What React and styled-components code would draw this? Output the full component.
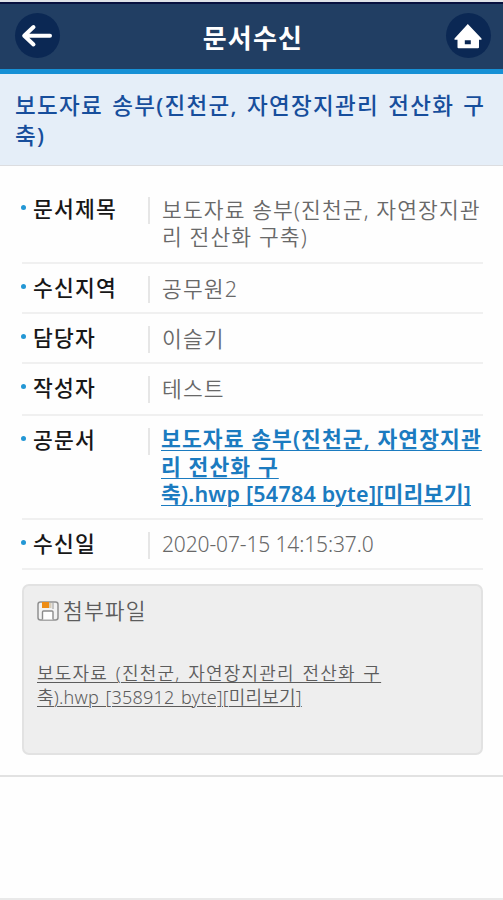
import React from "react";
import styled, { createGlobalStyle } from "styled-components";

const details = [
  { label: "문서제목", lines: ["보도자료 송부(진천군, 자연장지관", "리 전산화 구축)"], height: 79 },
  { label: "수신지역", lines: ["공무원2"], height: 50 },
  { label: "담당자", lines: ["이슬기"], height: 50 },
  { label: "작성자", lines: ["테스트"], height: 52 },
  {
    label: "공문서",
    lines: ["보도자료 송부(진천군, 자연장지관", "리 전산화 구", "축).hwp [54784 byte][미리보기]"],
    height: 104,
    link: true
  },
  { label: "수신일", lines: ["2020-07-15 14:15:37.0"], height: 50, latin: true }
];

export default function App() {
  return (
    <Page>
      <GlobalStyle />
      <Header>
        <RoundButton type="button" aria-label="뒤로">
          <svg width="45" height="45" viewBox="0 0 45 45" fill="none">
            <path
              d="M18.5 14 9.2 22.8 18.5 31.5M10 22.8H35"
              stroke="#fff"
              strokeWidth="4"
              strokeLinecap="round"
              strokeLinejoin="round"
            />
          </svg>
        </RoundButton>
        <HeaderTitle>문서수신</HeaderTitle>
        <RoundButton type="button" aria-label="홈">
          <svg width="45" height="45" viewBox="0 0 45 45">
            <path
              fill="#fff"
              fillRule="evenodd"
              d="M21.8 11 35.5 25.4v1.4H33v7.5q0 1-1 1H12.5q-1 0-1-1v-7.5H8.5v-1.4ZM18.8 27.3v4h6v-4Z"
            />
          </svg>
        </RoundButton>
      </Header>

      <Subject>
        보도자료 송부(진천군, 자연장지관리 전산화 구<br />축)
      </Subject>

      <Content>
        {details.map(item => (
          <Row key={item.label} $height={item.height}>
            <Label>{item.label}</Label>
            <Value $latin={item.latin} $link={item.link}>
              {item.lines.map(line =>
                item.link ? (
                  <FileLink key={line} href="#" $tight={line.includes("hwp")}>
                    {line}
                  </FileLink>
                ) : (
                  <Line key={line}>{line}</Line>
                )
              )}
            </Value>
          </Row>
        ))}

        <Attachment>
          <AttachmentTitle>
            <svg width="22" height="20" viewBox="0 0 22 20" fill="none">
              <rect x="1" y="1" width="20" height="18" rx="2.5" fill="#f3f3f3" stroke="#919191" strokeWidth="1.5" />
              <path d="M5 1h7v6H5Z" fill="#ee8d16" />
              <path d="M12 2h2.5v5H12Z" fill="#d8cdb8" />
              <path d="M16 2v6" stroke="#999" />
              <path d="M5.5 18.5V11q0-1 1-1H15q1 0 1 1v7.5" fill="#fff" stroke="#8c8c8c" strokeWidth="1.4" />
            </svg>
            첨부파일
          </AttachmentTitle>
          <AttachmentLink href="#">
            보도자료 (진천군, 자연장지관리 전산화 구<br />
            <Narrow>축).hwp [358912 byte][미리보기]</Narrow>
          </AttachmentLink>
        </Attachment>
      </Content>
    </Page>
  );
}

const GlobalStyle = createGlobalStyle`
  * {
    box-sizing: border-box;
  }
  body {
    margin: 0;
    background: #fefefe;
    font-family: "Noto Sans", "Noto Sans CJK KR", sans-serif;
  }
`;

const Page = styled.main`
  display: flex;
  flex-direction: column;
  width: 503px;
  height: 900px;
  overflow: hidden;
  border-top: 2px solid #dfe2e7;
  border-bottom: 2px solid #e9e9e9;
  white-space: nowrap;
`;

const Header = styled.header`
  display: flex;
  justify-content: space-between;
  flex: none;
  height: 72px;
  padding: 9px 12px 0 15px;
  background: #213e63;
  border-top: 2px solid #08113f;
  border-bottom: 5px solid #1690d5;
`;

const RoundButton = styled.button`
  width: 45px;
  height: 45px;
  padding: 0;
  border: 0;
  border-radius: 50%;
  background: #0b2854;
  svg {
    display: block;
  }
`;

const HeaderTitle = styled.h1`
  margin: 0;
  color: #fff;
  font-size: 26px;
  font-weight: 700;
  line-height: 51px;
  letter-spacing: 1.2px;
`;

const Subject = styled.h2`
  flex: none;
  height: 92px;
  margin: 0;
  padding: 17px 0 0 15px;
  background: #e5eef8;
  border-bottom: 1px solid #dcdde0;
  color: #174e9c;
  font-size: 22.5px;
  font-weight: 500;
  line-height: 30px;
  letter-spacing: 1.3px;
  word-spacing: 2px;
`;

const Content = styled.section`
  flex: none;
  height: 611px;
  padding: 19px 20px 0 22px;
  border-bottom: 2px solid #e2e2e2;
`;

const Row = styled.div`
  display: flex;
  height: ${props => props.$height}px;
  padding-top: 12px;
  border-bottom: 2px solid #f0f0f0;
  line-height: 27px;
`;

const Label = styled.div`
  display: flex;
  flex: none;
  width: 128px;
  height: 27px;
  border-right: 2px solid #e6e6e6;
  color: #171717;
  font-size: 21.5px;
  font-weight: 500;
  letter-spacing: 1.2px;
  line-height: 24px;
  &::before {
    content: "";
    width: 5px;
    height: 5px;
    margin: 8px 7px 0 -1px;
    border-radius: 50%;
    background: #2397d5;
  }
`;

const Value = styled.div`
  margin-top: ${props => (props.$link ? "-3px" : "-1px")};
  padding-left: ${props => (props.$link ? "11px" : "12px")};
  color: #686868;
  font-size: ${props => (props.$latin ? "21px" : "21.5px")};
  font-weight: 350;
  letter-spacing: ${props => (props.$latin ? "-0.13px" : "1.1px")};
`;

const Line = styled.div``;

const FileLink = styled.a`
  display: block;
  color: #1b7bc0;
  font-weight: 600;
  line-height: 27.5px;
  letter-spacing: ${props => (props.$tight ? "0.24px" : "1.1px")};
  text-underline-offset: 3px;
  text-decoration-thickness: 1px;
`;

const Attachment = styled.section`
  height: 171px;
  margin-top: 14px;
  padding: 12px 13px;
  border: 2px solid #e2e2e2;
  border-radius: 7px;
  background: #eee;
  color: #5c5c5c;
`;

const AttachmentTitle = styled.h3`
  display: flex;
  align-items: center;
  gap: 4px;
  margin: 0 0 37px;
  font-size: 21.5px;
  font-weight: 350;
  line-height: 26px;
  letter-spacing: 1.1px;
`;

const AttachmentLink = styled.a`
  display: block;
  color: #5c5c5c;
  font-size: 18px;
  font-weight: 350;
  line-height: 24px;
  letter-spacing: 1.2px;
  word-spacing: 1.8px;
  text-underline-offset: 2px;
  text-decoration-thickness: 1px;
`;

const Narrow = styled.span`
  letter-spacing: 0.2px;
`;
